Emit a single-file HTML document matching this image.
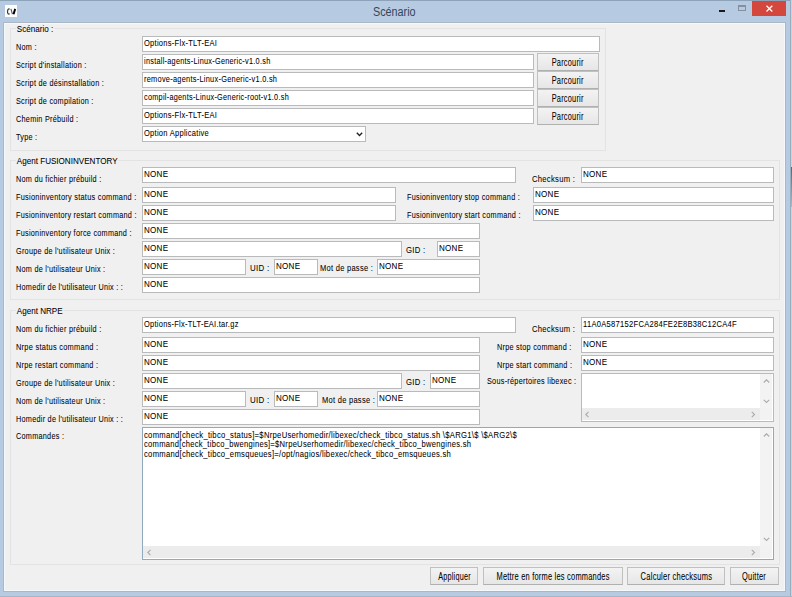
<!DOCTYPE html><html><head><meta charset="utf-8"><style>
*{margin:0;padding:0;box-sizing:content-box}
html,body{width:792px;height:597px;overflow:hidden}
body{position:relative;background:#b6cbe1;font-family:"Liberation Sans",sans-serif;font-size:8px;color:#1e1e1e}
div{position:absolute}
.l{line-height:10px;white-space:nowrap;color:#000;-webkit-text-stroke:0.12px rgba(0,0,0,0.5);font-size:9.5px;letter-spacing:0.35px;transform:scaleX(0.765);transform-origin:0 0}
.gt{line-height:10px;white-space:nowrap;background:#f0f0f0;padding:0 1px;color:#000;-webkit-text-stroke:0.12px rgba(0,0,0,0.5);font-size:9.5px;transform:scaleX(0.85);transform-origin:0 0}
.tb{background:#fff;border:1px solid #b9babc;overflow:hidden}
.tb span{position:absolute;left:1px;top:1px;line-height:10px;white-space:nowrap;color:#000;-webkit-text-stroke:0.12px rgba(0,0,0,0.5);font-size:9.5px;letter-spacing:0.35px;transform:scaleX(0.82);transform-origin:0 0}
.gb{border:1px solid #e3e3e3}
.btn{background:linear-gradient(#f3f3f3,#e6e6e6);border:1px solid #c0c0c0;border-bottom-color:#b0b0b0;text-align:center;white-space:nowrap;color:#000;-webkit-text-stroke:0.12px rgba(0,0,0,0.5);font-size:10px;letter-spacing:0.3px}
.btn{display:flex;justify-content:center}
.btn span{display:block;position:relative;top:1px;transform-origin:50% 50%}
</style></head><body>
<div style="left:0;top:0;width:792px;height:1px;background:#8ca3ba"></div>
<div style="left:790px;top:0;width:1px;height:597px;background:#9aabbd"></div>
<div style="left:791px;top:0;width:1px;height:597px;background:#c5d5e5"></div>
<div style="left:791px;top:167px;width:1px;height:40px;background:linear-gradient(#56677c,#a8b9cb)"></div>
<div style="left:0;top:596px;width:792px;height:1px;background:#a6b6c6"></div>
<div style="left:5px;top:5px;width:12px;height:12px;background:#fdfdfd"></div>
<svg style="position:absolute;left:0px;top:0px" width="20" height="20" viewBox="0 0 20 20"><path d="M9.6 9.3 C8.8 8.6 7.6 9 7.5 11.5 C7.5 13.8 8.6 14.6 9.6 13.6" stroke="#3a3a3a" stroke-width="1.2" fill="none"/><path d="M10.9 8.9 L12.4 14.1" stroke="#555" stroke-width="1.1" fill="none"/><path d="M15.2 8.9 L13.5 14.2" stroke="#000" stroke-width="2" fill="none"/></svg>
<div style="left:373px;top:5px;font-size:12px;line-height:14px;color:#34465a;white-space:nowrap;transform:scaleX(0.9);transform-origin:0 0">Scénario</div>
<div style="left:719px;top:10px;width:6px;height:2px;background:#1a1a1a"></div>
<div style="left:738px;top:5px;width:6px;height:3px;border:1px solid #8490a0;border-top-width:2px"></div>
<div style="left:752px;top:1px;width:34px;height:15px;background:#d4473c"></div>
<svg style="position:absolute;left:764px;top:4px" width="11" height="10" viewBox="0 0 11 10"><path d="M2.5 1.8 L8.3 7.5 M8.3 1.8 L2.5 7.5" stroke="#fff" stroke-width="1.3"/></svg>
<div style="left:3px;top:22px;width:781px;height:568px;border:1px solid #a9b7c6;background:#f0f0f0"></div>
<div style="left:4px;top:23px;width:779px;height:566px;border:1px solid #f6f9fc"></div>
<div class="gb" style="left:10px;top:28px;width:594px;height:121px"></div>
<div class="gt" style="left:16px;top:24px">Scénario :</div>
<div class="l" style="left:16px;top:42px">Nom :</div>
<div class="l" style="left:16px;top:60px">Script d'installation :</div>
<div class="l" style="left:16px;top:78px">Script de désinstallation :</div>
<div class="l" style="left:16px;top:96px">Script de compilation :</div>
<div class="l" style="left:16px;top:114px">Chemin Prébuild :</div>
<div class="l" style="left:16px;top:132px">Type :</div>
<div class="tb" style="left:142px;top:36px;width:456px;height:14px"><span style="transform:scaleX(0.79)">Options-Flx-TLT-EAI</span></div>
<div class="tb" style="left:142px;top:54px;width:390px;height:14px"><span style="transform:scaleX(0.768)">install-agents-Linux-Generic-v1.0.sh</span></div>
<div class="tb" style="left:142px;top:72px;width:390px;height:14px"><span style="transform:scaleX(0.776)">remove-agents-Linux-Generic-v1.0.sh</span></div>
<div class="tb" style="left:142px;top:90px;width:390px;height:14px"><span style="transform:scaleX(0.768)">compil-agents-Linux-Generic-root-v1.0.sh</span></div>
<div class="tb" style="left:142px;top:108px;width:390px;height:14px"><span style="transform:scaleX(0.79)">Options-Flx-TLT-EAI</span></div>
<div class="btn" style="left:537px;top:53px;width:60px;height:16px;line-height:16px"><span style="transform:scaleX(0.738)">Parcourir</span></div>
<div class="btn" style="left:537px;top:71px;width:60px;height:16px;line-height:16px"><span style="transform:scaleX(0.738)">Parcourir</span></div>
<div class="btn" style="left:537px;top:89px;width:60px;height:16px;line-height:16px"><span style="transform:scaleX(0.738)">Parcourir</span></div>
<div class="btn" style="left:537px;top:107px;width:60px;height:16px;line-height:16px"><span style="transform:scaleX(0.738)">Parcourir</span></div>
<div class="tb" style="left:142px;top:126px;width:222px;height:14px"><span style="transform:scaleX(0.79)">Option Applicative</span></div>
<svg style="position:absolute;left:356px;top:132px" width="7" height="5" viewBox="0 0 7 5"><path d="M0.8 0.8 L3.5 3.5 L6.2 0.8" stroke="#222" stroke-width="1.4" fill="none"/></svg>
<div class="gb" style="left:10px;top:160px;width:768px;height:138px"></div>
<div class="gt" style="left:16px;top:156px">Agent FUSIONINVENTORY</div>
<div class="l" style="left:16px;top:174px">Nom du fichier prébuild :</div>
<div class="l" style="left:16px;top:192px;transform:scaleX(0.773)">Fusioninventory status command :</div>
<div class="l" style="left:16px;top:210px">Fusioninventory restart command :</div>
<div class="l" style="left:16px;top:228px">Fusioninventory force command :</div>
<div class="l" style="left:16px;top:246px">Groupe de l'utilisateur Unix :</div>
<div class="l" style="left:16px;top:264px">Nom de l'utilisateur Unix :</div>
<div class="l" style="left:16px;top:282px">Homedir de l'utilisateur Unix : :</div>
<div class="tb" style="left:142px;top:167px;width:372px;height:14px"><span style="transform:scaleX(0.844)">NONE</span></div>
<div class="l" style="left:532px;top:174px;transform:scaleX(0.805)">Checksum :</div>
<div class="tb" style="left:581px;top:167px;width:191px;height:14px"><span style="transform:scaleX(0.844)">NONE</span></div>
<div class="tb" style="left:142px;top:187px;width:252px;height:14px"><span style="transform:scaleX(0.844)">NONE</span></div>
<div class="l" style="left:407px;top:192px">Fusioninventory stop command :</div>
<div class="tb" style="left:533px;top:187px;width:239px;height:14px"><span style="transform:scaleX(0.844)">NONE</span></div>
<div class="tb" style="left:142px;top:205px;width:252px;height:14px"><span style="transform:scaleX(0.844)">NONE</span></div>
<div class="l" style="left:407px;top:210px">Fusioninventory start command :</div>
<div class="tb" style="left:533px;top:205px;width:239px;height:14px"><span style="transform:scaleX(0.844)">NONE</span></div>
<div class="tb" style="left:142px;top:223px;width:336px;height:14px"><span style="transform:scaleX(0.844)">NONE</span></div>
<div class="tb" style="left:142px;top:241px;width:258px;height:14px"><span style="transform:scaleX(0.844)">NONE</span></div>
<div class="l" style="left:406px;top:245px;transform:scaleX(0.81)">GID :</div>
<div class="tb" style="left:437px;top:241px;width:41px;height:14px"><span style="transform:scaleX(0.844)">NONE</span></div>
<div class="tb" style="left:142px;top:259px;width:102px;height:14px"><span style="transform:scaleX(0.844)">NONE</span></div>
<div class="l" style="left:250px;top:263px;transform:scaleX(0.83)">UID :</div>
<div class="tb" style="left:274px;top:259px;width:42px;height:14px"><span style="transform:scaleX(0.844)">NONE</span></div>
<div class="l" style="left:320px;top:263px;transform:scaleX(0.79)">Mot de passe :</div>
<div class="tb" style="left:377px;top:259px;width:101px;height:14px"><span style="transform:scaleX(0.844)">NONE</span></div>
<div class="tb" style="left:142px;top:277px;width:336px;height:14px"><span style="transform:scaleX(0.844)">NONE</span></div>
<div class="gb" style="left:10px;top:310px;width:768px;height:253px"></div>
<div class="gt" style="left:16px;top:306px">Agent NRPE</div>
<div class="l" style="left:16px;top:324px">Nom du fichier prébuild :</div>
<div class="l" style="left:16px;top:342px;transform:scaleX(0.78)">Nrpe status command :</div>
<div class="l" style="left:16px;top:360px">Nrpe restart command :</div>
<div class="l" style="left:16px;top:378px">Groupe de l'utilisateur Unix :</div>
<div class="l" style="left:16px;top:396px">Nom de l'utilisateur Unix :</div>
<div class="l" style="left:16px;top:414px">Homedir de l'utilisateur Unix : :</div>
<div class="l" style="left:16px;top:431px">Commandes :</div>
<div class="tb" style="left:142px;top:317px;width:372px;height:14px"><span style="transform:scaleX(0.783)">Options-Flx-TLT-EAI.tar.gz</span></div>
<div class="l" style="left:532px;top:324px;transform:scaleX(0.805)">Checksum :</div>
<div class="tb" style="left:581px;top:317px;width:191px;height:14px"><span style="transform:scaleX(0.797)">11A0A587152FCA284FE2E8B38C12CA4F</span></div>
<div class="tb" style="left:142px;top:337px;width:336px;height:14px"><span style="transform:scaleX(0.844)">NONE</span></div>
<div class="l" style="left:497px;top:342px">Nrpe stop command :</div>
<div class="tb" style="left:581px;top:337px;width:191px;height:14px"><span style="transform:scaleX(0.844)">NONE</span></div>
<div class="tb" style="left:142px;top:355px;width:336px;height:14px"><span style="transform:scaleX(0.844)">NONE</span></div>
<div class="l" style="left:497px;top:360px">Nrpe start command :</div>
<div class="tb" style="left:581px;top:355px;width:191px;height:14px"><span style="transform:scaleX(0.844)">NONE</span></div>
<div class="tb" style="left:142px;top:373px;width:258px;height:14px"><span style="transform:scaleX(0.844)">NONE</span></div>
<div class="l" style="left:406px;top:377px;transform:scaleX(0.81)">GID :</div>
<div class="tb" style="left:430px;top:373px;width:48px;height:14px"><span style="transform:scaleX(0.844)">NONE</span></div>
<div class="l" style="left:487px;top:376px">Sous-répertoires libexec :</div>
<div class="tb" style="left:142px;top:391px;width:102px;height:14px"><span style="transform:scaleX(0.844)">NONE</span></div>
<div class="l" style="left:250px;top:395px;transform:scaleX(0.83)">UID :</div>
<div class="tb" style="left:274px;top:391px;width:42px;height:14px"><span style="transform:scaleX(0.844)">NONE</span></div>
<div class="l" style="left:322px;top:395px;transform:scaleX(0.79)">Mot de passe :</div>
<div class="tb" style="left:377px;top:391px;width:101px;height:14px"><span style="transform:scaleX(0.844)">NONE</span></div>
<div class="tb" style="left:142px;top:409px;width:336px;height:14px"><span style="transform:scaleX(0.844)">NONE</span></div>
<div class="tb" style="left:581px;top:373px;width:191px;height:47px"></div>
<div style="left:760px;top:374px;width:12px;height:34px;background:#f3f3f3"></div>
<div style="left:582px;top:408px;width:178px;height:12px;background:#ececec"></div>
<div style="left:760px;top:408px;width:12px;height:12px;background:#f2f2f2"></div>
<svg style="position:absolute;left:763px;top:379px" width="7" height="5" viewBox="0 0 7 5"><path d="M0.8 3.5 L3.5 0.8 L6.2 3.5" stroke="#adadad" stroke-width="1.2" fill="none"/></svg>
<svg style="position:absolute;left:763px;top:399px" width="7" height="5" viewBox="0 0 7 5"><path d="M0.8 0.8 L3.5 3.5 L6.2 0.8" stroke="#adadad" stroke-width="1.2" fill="none"/></svg>
<svg style="position:absolute;left:585px;top:411px" width="5" height="7" viewBox="0 0 5 7"><path d="M3.5 0.8 L0.8 3.5 L3.5 6.2" stroke="#adadad" stroke-width="1.2" fill="none"/></svg>
<svg style="position:absolute;left:751px;top:411px" width="5" height="7" viewBox="0 0 5 7"><path d="M0.8 0.8 L3.5 3.5 L0.8 6.2" stroke="#adadad" stroke-width="1.2" fill="none"/></svg>
<div style="left:142px;top:427px;width:630px;height:131px;border:1px solid #80aecb;border-left-color:#8fa9bf;background:#fff"></div>
<div style="left:760px;top:428px;width:12px;height:118px;background:#f3f3f3"></div>
<div style="left:143px;top:546px;width:617px;height:12px;background:#ececec"></div>
<div style="left:760px;top:546px;width:12px;height:12px;background:#f2f2f2"></div>
<svg style="position:absolute;left:763px;top:433px" width="7" height="5" viewBox="0 0 7 5"><path d="M0.8 3.5 L3.5 0.8 L6.2 3.5" stroke="#adadad" stroke-width="1.2" fill="none"/></svg>
<svg style="position:absolute;left:763px;top:537px" width="7" height="5" viewBox="0 0 7 5"><path d="M0.8 0.8 L3.5 3.5 L6.2 0.8" stroke="#adadad" stroke-width="1.2" fill="none"/></svg>
<svg style="position:absolute;left:147px;top:549px" width="5" height="7" viewBox="0 0 5 7"><path d="M3.5 0.8 L0.8 3.5 L3.5 6.2" stroke="#adadad" stroke-width="1.2" fill="none"/></svg>
<svg style="position:absolute;left:751px;top:549px" width="5" height="7" viewBox="0 0 5 7"><path d="M0.8 0.8 L3.5 3.5 L0.8 6.2" stroke="#adadad" stroke-width="1.2" fill="none"/></svg>
<div class="l" style="left:144px;top:430px;line-height:9.3px;transform:scaleX(0.806)">command[check_tibco_status]=$NrpeUserhomedir/libexec/check_tibco_status.sh \$ARG1\$ \$ARG2\$</div>
<div class="l" style="left:144px;top:439.3px;line-height:9.3px;transform:scaleX(0.798)">command[check_tibco_bwengines]=$NrpeUserhomedir/libexec/check_tibco_bwengines.sh</div>
<div class="l" style="left:144px;top:448.6px;line-height:9.3px;transform:scaleX(0.804)">command[check_tibco_emsqueues]=/opt/nagios/libexec/check_tibco_emsqueues.sh</div>
<div class="btn" style="left:430px;top:567px;width:46px;height:16px;line-height:16px"><span style="transform:scaleX(0.727)">Appliquer</span></div>
<div class="btn" style="left:483px;top:567px;width:138px;height:16px;line-height:16px"><span style="transform:scaleX(0.744)">Mettre en forme les commandes</span></div>
<div class="btn" style="left:627px;top:567px;width:96px;height:16px;line-height:16px"><span style="transform:scaleX(0.755)">Calculer checksums</span></div>
<div class="btn" style="left:730px;top:567px;width:47px;height:16px;line-height:16px"><span style="transform:scaleX(0.744)">Quitter</span></div>
</body></html>
